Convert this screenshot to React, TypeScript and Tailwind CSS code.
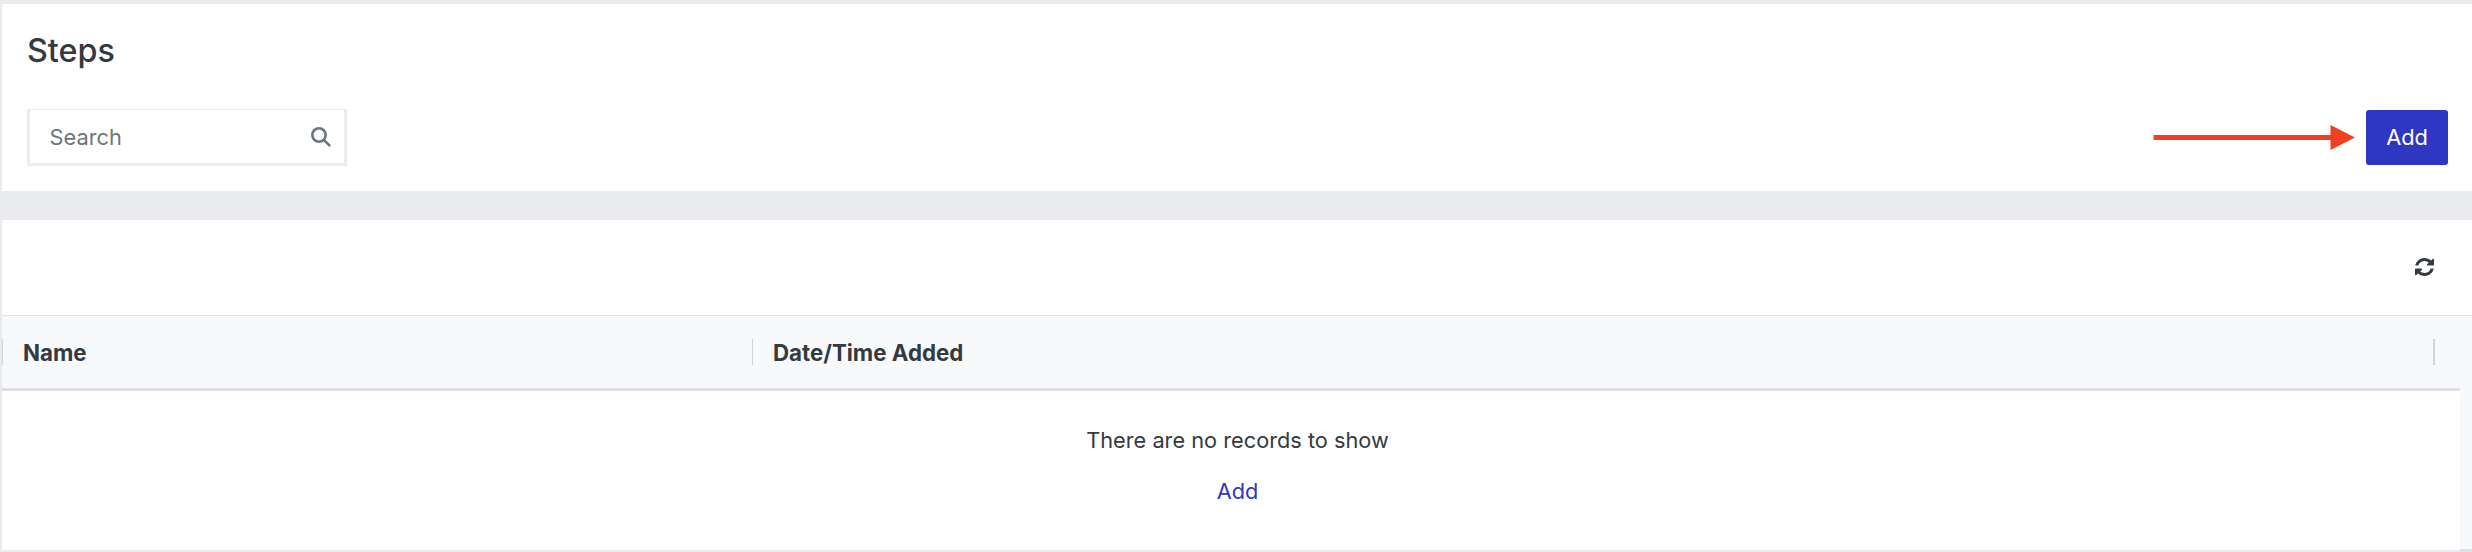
const columns = [
  { title: "Name", width: "w-[750px]" },
  { title: "Date/Time Added", width: "w-[1681px]" },
];

function SearchIcon() {
  return (
    <svg width="20" height="20" viewBox="0 0 20 20" fill="none" stroke="#6c757d">
      <circle cx="8" cy="8" r="6.7" strokeWidth="2.6" />
      <path d="M12.8 12.8 18.4 18.4" strokeWidth="2.6" strokeLinecap="round" />
    </svg>
  );
}

function RefreshIcon() {
  return (
    <svg width="19" height="18" viewBox="0 128 1536 1536" preserveAspectRatio="none" fill="currentColor">
      <path d="M1511 1056q0 5-1 7-64 268-268 434.5t-478 166.5q-146 0-282.5-55t-243.5-157l-129 129q-19 19-45 19t-45-19-19-45v-448q0-26 19-45t45-19h448q26 0 45 19t19 45-19 45l-137 137q71 66 161 102t187 36q134 0 250-65t186-179q11-17 53-117 8-23 30-23h192q13 0 22.5 9.5t9.5 22.5zm25-800v448q0 26-19 45t-45 19h-448q-26 0-45-19t-19-45 19-45l138-138q-148-137-349-137-134 0-250 65t-186 179q-11 17-53 117-8 23-30 23h-199q-13 0-22.5-9.5t-9.5-22.5v-7q65-268 270-434.5t480-166.5q146 0 284 55.5t245 156.5l130-129q19-19 45-19t45 19 19 45z" />
    </svg>
  );
}

function Arrow() {
  return (
    <svg className="mr-[11px]" width="202" height="25" viewBox="0 0 202 25" fill="#ee4023">
      <path d="M.5 10h177V0l24.5 12.5L177.5 25V15H.5z" />
    </svg>
  );
}

function StepsHeader() {
  return (
    <section className="h-[187px] rounded-tl-[2px] bg-white pl-[25px] pr-6 pt-[25px]">
      <h1 className="h-20 text-[32.3px] font-medium leading-[44px]">Steps</h1>
      <div className="flex h-[57px] items-center justify-between">
        <div className="flex h-[57px] w-[320px] items-center justify-between border-[3px] border-t border-[#eaebef] pl-[19.5px] pr-[13px]">
          <input
            className="w-[200px] bg-transparent pt-0.5 text-[21.8px] text-[#6c757d] outline-none placeholder:text-[#6c757d]"
            placeholder="Search"
          />
          <SearchIcon />
        </div>
        <div className="flex items-center">
          <Arrow />
          <button className="h-[55px] w-[82px] rounded-[3px] bg-[#2f36c2] text-[21.8px] text-white">
            Add
          </button>
        </div>
      </div>
    </section>
  );
}

function StepsTable() {
  return (
    <section className="mt-[29px] h-[332px] rounded-tl-[2px] bg-white">
      <div className="flex h-24 items-center justify-end border-b border-[#dee2e6] pb-px pr-[38px]">
        <RefreshIcon />
      </div>
      <div className="flex h-[236px] bg-[#f8f9fb]">
        <div className="w-[2458px]">
          <div className="flex h-[75px] items-center border-b-[3px] border-[#dfe0e7]">
            {columns.map((column) => (
              <div key={column.title} className={`flex items-center ${column.width}`}>
                <div className="h-[26px] w-px bg-[#ced4da]" />
                <span className="ml-5 pt-0.5 text-[22.3px] font-bold leading-[30px]">{column.title}</span>
              </div>
            ))}
            <div className="h-[26px] w-0.5 bg-[#ced4da]" />
          </div>
          <div className="flex h-[161px] flex-col items-center border-b-2 border-[#e9eaec] bg-white pl-[13px] pt-[33px] text-[21.75px] leading-[33px]">
            <p>There are no records to show</p>
            <a className="mt-[18px] text-[#2f36c2]">Add</a>
          </div>
        </div>
        <div className="flex-1 border-b-[3px] border-[#dfe0e7]" />
      </div>
    </section>
  );
}

export default function App() {
  return (
    <main className="h-[552px] w-[2472px] overflow-hidden bg-[#eaebef] pl-0.5 pt-1 font-['Inter',sans-serif] text-[#343a40]">
      <StepsHeader />
      <StepsTable />
    </main>
  );
}
